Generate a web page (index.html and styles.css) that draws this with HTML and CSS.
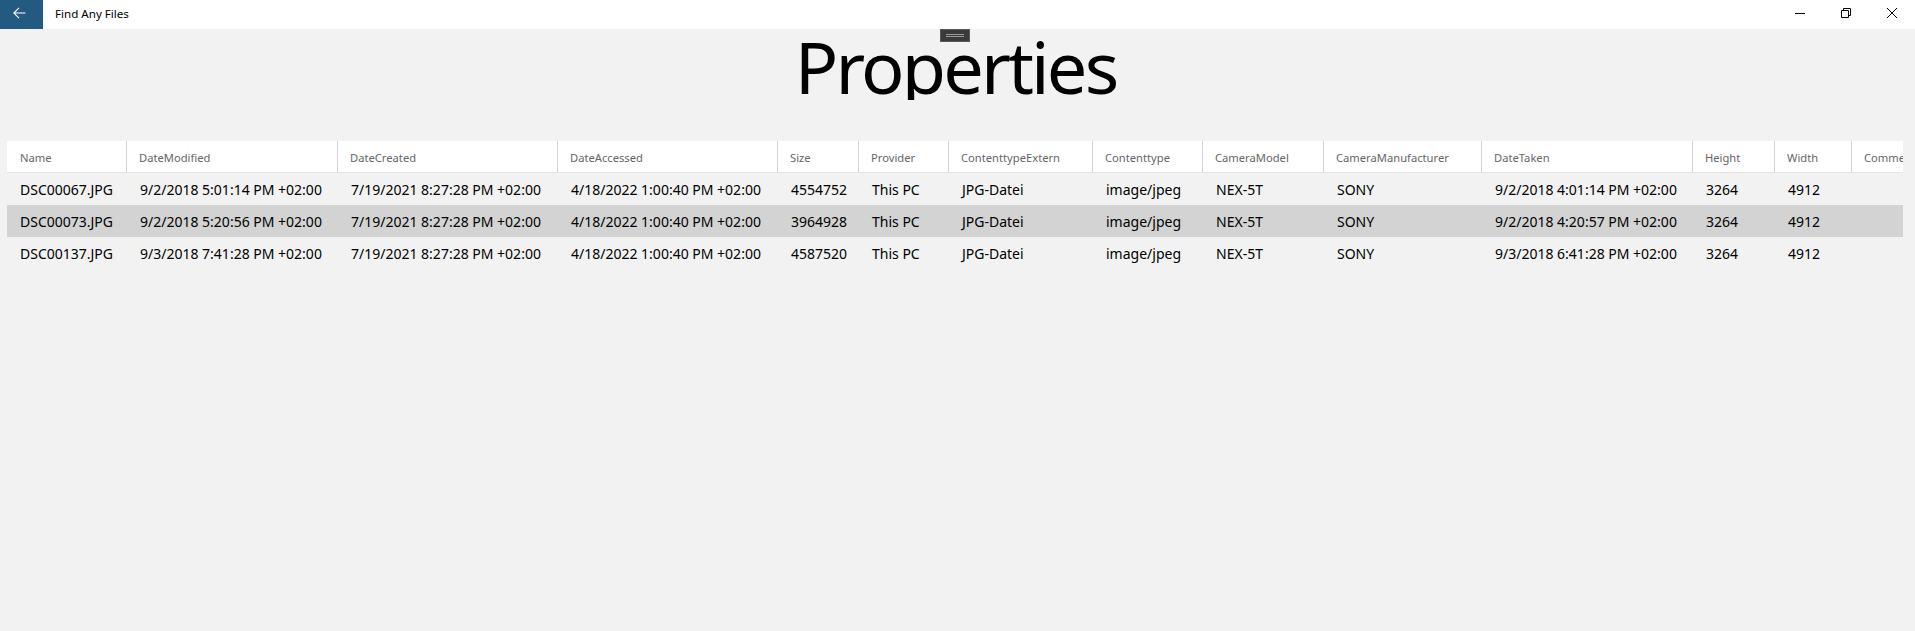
FILE: index.html
```html
<!DOCTYPE html>
<html lang="en">
<head>
<meta charset="utf-8">
<title>Find Any Files</title>
<link rel="stylesheet" href="styles.css">
</head>
<body>
<header class="titlebar">
  <div class="back">
    <svg width="13" height="12" viewBox="0 0 13 12"><path d="M12.5 6H1M6 0.8L0.8 6L6 11.2" fill="none" stroke="#fff" stroke-width="1.1"/></svg>
  </div>
  <div class="app-title">Find Any Files</div>
  <div class="caption">
    <div class="cbtn"><svg width="10" height="10" viewBox="0 0 10 10"><path d="M0 5.5H10" stroke="#000" stroke-width="1"/></svg></div>
    <div class="cbtn"><svg width="10" height="10" viewBox="0 0 10 10"><path d="M0.5 2.5H7.5V9.5H0.5Z M2.5 2.5V0.5H9.5V7.5H7.5" fill="none" stroke="#000" stroke-width="1"/></svg></div>
    <div class="cbtn"><svg width="10" height="10" viewBox="0 0 10 10"><path d="M0 0L10 10M10 0L0 10" stroke="#000" stroke-width="1"/></svg></div>
  </div>
</header>
<main class="page">
  <div class="handle"></div>
  <div class="hero"><h1>Properties</h1></div>
  <div class="grid">
    <div class="row head">
      <div class="cell">Name</div><div class="cell">DateModified</div><div class="cell">DateCreated</div><div class="cell">DateAccessed</div><div class="cell">Size</div><div class="cell">Provider</div><div class="cell">ContenttypeExtern</div><div class="cell">Contenttype</div><div class="cell">CameraModel</div><div class="cell">CameraManufacturer</div><div class="cell">DateTaken</div><div class="cell">Height</div><div class="cell">Width</div><div class="cell">Comments</div>
    </div>
    <div class="row">
      <div class="cell">DSC00067.JPG</div><div class="cell">9/2/2018 5:01:14 PM +02:00</div><div class="cell">7/19/2021 8:27:28 PM +02:00</div><div class="cell">4/18/2022 1:00:40 PM +02:00</div><div class="cell">4554752</div><div class="cell">This PC</div><div class="cell">JPG-Datei</div><div class="cell">image/jpeg</div><div class="cell">NEX-5T</div><div class="cell">SONY</div><div class="cell">9/2/2018 4:01:14 PM +02:00</div><div class="cell">3264</div><div class="cell">4912</div><div class="cell"></div>
    </div>
    <div class="row alt">
      <div class="cell">DSC00073.JPG</div><div class="cell">9/2/2018 5:20:56 PM +02:00</div><div class="cell">7/19/2021 8:27:28 PM +02:00</div><div class="cell">4/18/2022 1:00:40 PM +02:00</div><div class="cell">3964928</div><div class="cell">This PC</div><div class="cell">JPG-Datei</div><div class="cell">image/jpeg</div><div class="cell">NEX-5T</div><div class="cell">SONY</div><div class="cell">9/2/2018 4:20:57 PM +02:00</div><div class="cell">3264</div><div class="cell">4912</div><div class="cell"></div>
    </div>
    <div class="row">
      <div class="cell">DSC00137.JPG</div><div class="cell">9/3/2018 7:41:28 PM +02:00</div><div class="cell">7/19/2021 8:27:28 PM +02:00</div><div class="cell">4/18/2022 1:00:40 PM +02:00</div><div class="cell">4587520</div><div class="cell">This PC</div><div class="cell">JPG-Datei</div><div class="cell">image/jpeg</div><div class="cell">NEX-5T</div><div class="cell">SONY</div><div class="cell">9/3/2018 6:41:28 PM +02:00</div><div class="cell">3264</div><div class="cell">4912</div><div class="cell"></div>
    </div>
  </div>
</main>
</body>
</html>
```
FILE: styles.css
```css
html, body {
  margin: 0;
  padding: 0;
}
body {
  width: 1915px;
  height: 631px;
  overflow: hidden;
  background: #f2f2f2;
  font-family: "Noto Sans", "Open Sans", sans-serif;
  color: #000;
}
.titlebar {
  height: 29px;
  background: #fff;
  display: flex;
  align-items: center;
}
.back {
  width: 43px;
  height: 29px;
  background: #235a82;
  display: flex;
  align-items: center;
  padding-left: 13px;
  box-sizing: border-box;
  padding-bottom: 4px;
}
.back svg { display: block; }
.app-title {
  margin-left: 12px;
  font-size: 11.6px;
  padding-bottom: 3px;
}
.caption {
  margin-left: auto;
  display: flex;
}
.cbtn {
  width: 46px;
  height: 29px;
  display: flex;
  align-items: center;
  justify-content: center;
  padding-bottom: 3px;
  box-sizing: border-box;
}
.cbtn svg { display: block; }
.page {
  position: relative;
}
.handle {
  position: absolute;
  top: 0;
  left: 940px;
  width: 30px;
  height: 13px;
  background: #3a3a3a;
  border: 1px solid #5a5a5a;
  box-sizing: border-box;
}
.handle::before {
  content: "";
  position: absolute;
  left: 5px;
  right: 5px;
  top: 4px;
  height: 1px;
  border-top: 1px solid #9a9a9a;
  border-bottom: 1px solid #9a9a9a;
}
.hero {
  height: 71px;
  overflow: hidden;
  text-align: center;
}
.hero h1 {
  margin: 0 0 0 -4px;
  font-size: 72px;
  line-height: 74px;
  font-weight: 400;
  letter-spacing: -2.8px;
}
.grid {
  margin: 41px 12px 0 7px;
  overflow: hidden;
}
.row {
  display: grid;
  grid-template-columns: 119px 211px 220px 220px 81px 90px 144px 110px 121px 158px 211px 82px 77px 120px;
  width: max-content;
  height: 32px;
  font-size: 14px;
}
.row.alt {
  background: #d3d3d3;
}
.cell {
  display: flex;
  align-items: center;
  padding-left: 12px;
  border-left: 1px solid transparent;
  white-space: nowrap;
  overflow: hidden;
}
.cell:first-child {
  padding-left: 12px;
}
.row.head {
  background: #fff;
  height: 32px;
  box-sizing: border-box;
  border-bottom: 1px solid #e4e4e4;
  font-size: 11.2px;
  color: #666;
}
.row.head .cell {
  padding-top: 1px;
}
.row.head .cell + .cell {
  border-left-color: #d4d4d4;
}
.row:not(.head) .cell + .cell {
  padding-left: 13px;
}
```
